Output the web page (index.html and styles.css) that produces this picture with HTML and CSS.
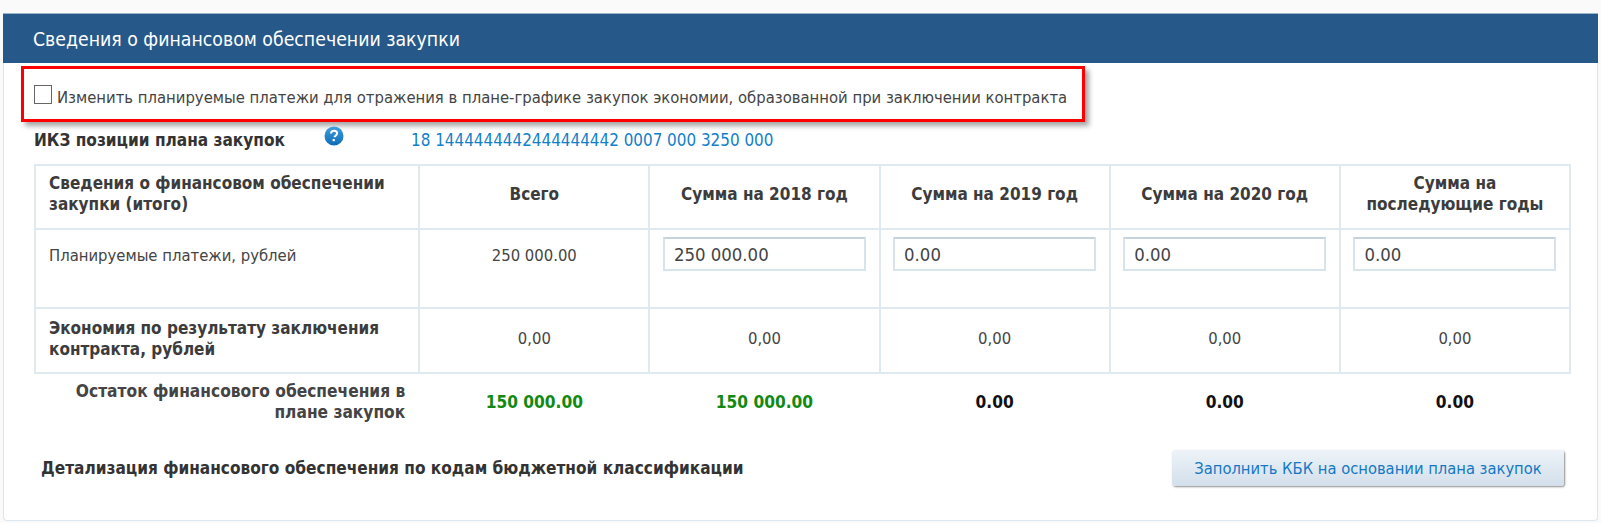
FILE: index.html
```html
<!DOCTYPE html>
<html lang="ru">
<head>
    <meta charset="UTF-8">
    <title>Сведения о финансовом обеспечении закупки</title>
    <link rel="stylesheet" href="styles.css">
</head>
<body>
    <div class="card">
        <div class="card-header">Сведения о финансовом обеспечении закупки</div>

        <!-- Highlighted option -->
        <div class="notice">
            <span class="checkbox"></span>
            <span class="notice-text">Изменить планируемые платежи для отражения в плане-графике закупок экономии, образованной при заключении контракта</span>
        </div>

        <div class="ikz-row">
            <span class="ikz-label">ИКЗ позиции плана закупок</span>
            <svg class="help-icon" width="20" height="20" viewBox="0 0 20 20">
                <defs>
                    <linearGradient id="helpFill" x1="0" y1="0" x2="0" y2="1">
                        <stop offset="0" stop-color="#3f9fe0"/>
                        <stop offset="1" stop-color="#0f6cb4"/>
                    </linearGradient>
                </defs>
                <circle cx="10" cy="10" r="9.5" fill="url(#helpFill)"/>
                <path d="M7 7.6c0-1.8 1.3-2.8 3.1-2.8 1.8 0 3 1 3 2.5 0 1.2-.7 1.8-1.5 2.4-.7.5-1 .8-1 1.6" fill="none" stroke="#fff" stroke-width="2"/>
                <rect x="8.6" y="13" width="2.2" height="2.2" fill="#fff"/>
            </svg>
            <span class="ikz-value">18 1444444442444444442 0007 000 3250 000</span>
        </div>

        <table class="finance-table">
            <colgroup>
                <col class="col-name">
                <col class="col-sum">
                <col class="col-sum">
                <col class="col-sum">
                <col class="col-sum">
                <col class="col-sum">
            </colgroup>
            <tr class="row-head">
                <th class="name">Сведения о финансовом обеспечении закупки (итого)</th>
                <th>Всего</th>
                <th>Сумма на 2018 год</th>
                <th>Сумма на 2019 год</th>
                <th>Сумма на 2020 год</th>
                <th>Сумма на<br>последующие годы</th>
            </tr>
            <tr class="row-plan">
                <td class="name">Планируемые платежи, рублей</td>
                <td>250 000.00</td>
                <td><input type="text" value="250 000.00"></td>
                <td><input type="text" value="0.00"></td>
                <td><input type="text" value="0.00"></td>
                <td><input type="text" value="0.00"></td>
            </tr>
            <tr class="row-saving">
                <th class="name">Экономия по результату заключения контракта, рублей</th>
                <td>0,00</td>
                <td>0,00</td>
                <td>0,00</td>
                <td>0,00</td>
                <td>0,00</td>
            </tr>
            <tr class="row-rest">
                <th class="rest-label">Остаток финансового обеспечения в плане закупок</th>
                <td class="green">150 000.00</td>
                <td class="green">150 000.00</td>
                <td>0.00</td>
                <td>0.00</td>
                <td>0.00</td>
            </tr>
        </table>

        <div class="detail-row">
            <span class="detail-title">Детализация финансового обеспечения по кодам бюджетной классификации</span>
            <button class="fill-button">Заполнить КБК на основании плана закупок</button>
        </div>
    </div>
</body>
</html>
```

FILE: styles.css
```css
body {
    margin: 0;
    padding: 13px 3px 1px 3px;
    background-color: #fafafa;
    font-family: "DejaVu Sans Condensed", "DejaVu Sans", sans-serif;
    font-size: 16.5px;
    color: #444;
}

.card {
    height: 507px;
    background-color: #fff;
    border: 1px solid #dbe7ee;
    border-top: none;
    border-radius: 0 0 4px 4px;
}

.card-header {
    height: 50px;
    line-height: 51px;
    padding-left: 30px;
    margin: 0 -1px;
    background-color: #27588a;
    border-top: 1px solid #9db6cc;
    box-sizing: border-box;
    color: #fff;
    font-size: 19.3px;
}

.notice {
    display: flex;
    align-items: center;
    box-sizing: border-box;
    width: 1064px;
    height: 56px;
    margin: 3px 0 0 17px;
    padding-left: 10px;
    border: 3px solid #f00;
    box-shadow: 4px 4px 5px rgba(0, 0, 0, 0.35);
}

.checkbox {
    width: 16px;
    height: 17px;
    margin-right: 5px;
    border: 1px solid #666;
    background-color: #fff;
}

.notice-text {
    position: relative;
    top: 3px;
    font-size: 16.5px;
    white-space: nowrap;
}

.ikz-row {
    display: flex;
    align-items: center;
    height: 30px;
    margin: 3px 0 0 30px;
}

.ikz-label {
    width: 290px;
    font-size: 17.1px;
    font-weight: bold;
    color: #333;
}

.help-icon {
    margin-top: -8px;
}

.ikz-value {
    margin-left: 67px;
    font-size: 16.9px;
    color: #1280c8;
}

.finance-table {
    table-layout: fixed;
    width: 1537px;
    margin: 9px 0 0 30px;
    border-collapse: collapse;
}

.col-name {
    width: 384px;
}

.col-sum {
    width: 230px;
}

.finance-table th,
.finance-table td {
    padding: 0;
    border: 2px solid #deeaf0;
    text-align: center;
    line-height: 21px;
}

.finance-table th {
    font-size: 17px;
    color: #3c3c3c;
}

.finance-table .name {
    padding-left: 13px;
    padding-right: 20px;
    text-align: left;
}

.row-head th {
    padding-bottom: 6px;
}

.row-head {
    height: 64px;
}

.row-plan {
    height: 79px;
}

.finance-table .row-plan td {
    vertical-align: top;
    padding-top: 7px;
}

.finance-table .row-plan td.name,
.finance-table .row-plan td:nth-child(2) {
    padding-top: 15px;
}

.row-saving {
    height: 65px;
}

.finance-table .row-saving th,
.finance-table .row-saving td {
    padding-bottom: 4px;
}

.row-rest {
    height: 62px;
}

.finance-table .row-rest th,
.finance-table .row-rest td {
    border: none;
    padding-bottom: 4px;
    font-size: 17.2px;
    font-weight: bold;
    color: #111;
}

.finance-table .row-rest .rest-label {
    padding: 0 14px 6px 30px;
    font-size: 17.2px;
    text-align: right;
    color: #444;
}

.finance-table .row-rest .green {
    color: #128a12;
}

.finance-table input {
    box-sizing: border-box;
    width: 203px;
    height: 34px;
    padding: 0 9px;
    border: 2px solid #d8e4eb;
    border-top-color: #c6d3dc;
    font-family: inherit;
    font-size: 18.4px;
    color: #444;
    outline: none;
}

.detail-row {
    display: flex;
    justify-content: space-between;
    align-items: center;
    margin: 15px 33px 0 37px;
}

.detail-title {
    font-weight: bold;
    font-size: 17.1px;
    color: #333;
}

.fill-button {
    width: 392px;
    height: 36px;
    border: none;
    border-radius: 3px;
    background: linear-gradient(#edf3f8, #d3dfeb);
    box-shadow: 1px 1px 2px rgba(0, 0, 0, 0.45);
    font-family: inherit;
    font-size: 16.4px;
    color: #1478c4;
}
```
